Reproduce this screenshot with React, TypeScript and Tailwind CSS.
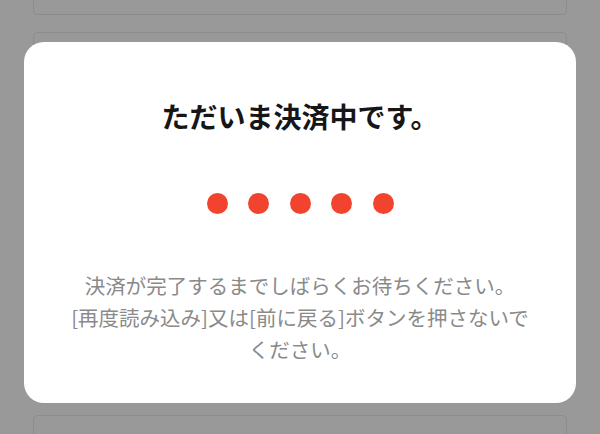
import React from "react";

export default function App() {
  const jp = { fontFamily: '"Noto Sans CJK JP", "Noto Sans", sans-serif' };
  return (
    <div className="relative h-[434px] w-[600px] overflow-hidden bg-[#999999]" style={jp}>
      <div className="mt-[-85px] flex flex-col gap-[17px] px-[33px]">
        <div className="h-[100px] rounded-[5px] border border-[#8c8c8c]" />
        <div className="h-[366px] rounded-[5px] border border-[#8c8c8c]" />
        <div className="h-[100px] rounded-[5px] border border-[#8c8c8c]" />
      </div>
      <div className="absolute left-[24px] top-[42px] flex h-[361px] w-[552px] flex-col items-center rounded-[20px] bg-white px-[40px] pt-[55px] text-center">
        <div className="text-[28px] font-bold leading-[38px] text-[#161616]">
          ただいま決済中です。
        </div>
        <div className="mt-[58px] flex justify-center gap-[20.5px]">
          {[0, 1, 2, 3, 4].map((i) => (
            <span key={i} className="block h-[21px] w-[21px] rounded-full bg-[#f2432e]" />
          ))}
        </div>
        <div className="mt-[55px] w-[470px] text-[20.5px] leading-[32px] text-[#8a8a8a]">
          決済が完了するまでしばらくお待ちください。
          <br />
          [再度読み込み]又は[前に戻る]ボタンを押さないで
          <br />
          ください。
        </div>
      </div>
    </div>
  );
}
